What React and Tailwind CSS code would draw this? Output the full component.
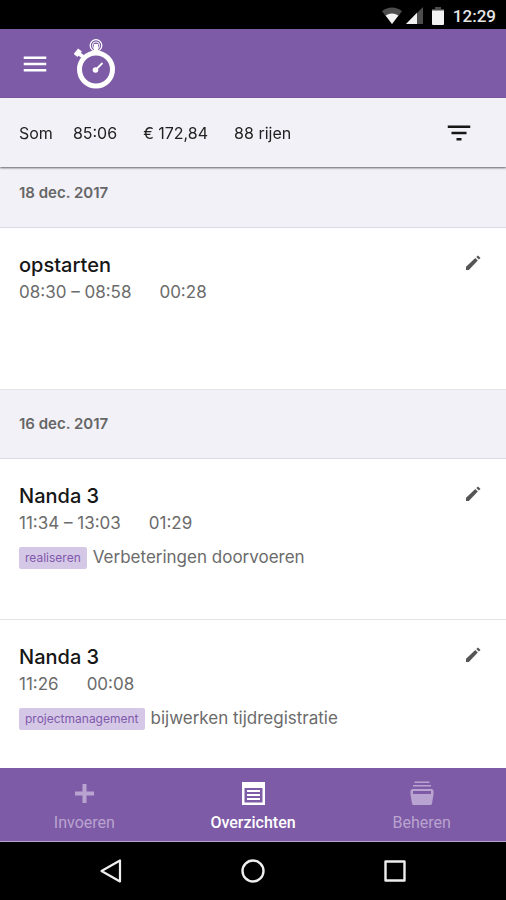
import React from 'react';
import { MdFilterList, MdMenu } from 'react-icons/md';

const days = [
  {
    date: '18 dec. 2017',
    entries: [{ id: 1, title: 'opstarten', time: '08:30 – 08:58', duration: '00:28' }],
  },
  {
    date: '16 dec. 2017',
    entries: [
      { id: 2, title: 'Nanda 3', time: '11:34 – 13:03', duration: '01:29', tag: 'realiseren', note: 'Verbeteringen doorvoeren' },
      { id: 3, title: 'Nanda 3', time: '11:26', duration: '00:08', tag: 'projectmanagement', note: 'bijwerken tijdregistratie' },
    ],
  },
];

const StatusBar = () => (
  <div className="flex h-[29px] shrink-0 items-center justify-end bg-black pr-2.5 pt-0.5 font-['Roboto',sans-serif] text-[17px] font-medium leading-6 text-[#e6e6e6]">
    <svg className="mr-0.5 h-[18px] w-[22px]" viewBox="0 0 22 18">
      <path d="M1 4.2C7 -.6 15 -.6 21 4.2L11 17z" fill="#4d4d4d" />
      <path d="M4.6 8.6c4-2.8 8.8-2.8 12.8 0L11 17z" fill="#f2f2f2" />
    </svg>
    <svg className="mr-2 h-[18px] w-[18px]" viewBox="0 0 18 18">
      <path d="M18 0v17H1z" fill="#4d4d4d" />
      <path d="M12 5.7V17H1z" fill="#f2f2f2" />
    </svg>
    <svg className="mr-2 h-[18px] w-[14px]" viewBox="0 0 14 18">
      <path d="M4 0h6v2h3v3H1V2h3z" fill="#4d4d4d" />
      <path d="M1 3.5h12V17a1 1 0 0 1-1 1H2a1 1 0 0 1-1-1z" fill="#f2f2f2" />
    </svg>
    <span>12:29</span>
  </div>
);

const StopwatchLogo = () => (
  <svg className="h-[50px] w-[42px]" viewBox="0 0 42 50" fill="none" stroke="#fff">
    <circle cx="22" cy="6.5" r="5.8" strokeWidth="1.3" />
    <circle cx="22" cy="6.5" r="3.6" strokeWidth="1" />
    <path d="M22 5v9" strokeWidth="4.4" />
    <circle cx="22" cy="30.5" r="16.5" strokeWidth="5" />
    <path d="M10 18.5L4 14" strokeWidth="3.6" />
    <path d="M1.5 16.5l4.5-5.5" strokeWidth="5" />
    <path d="M22 30.5l6.5-6.5" strokeWidth="1.8" />
    <circle cx="21.5" cy="31" r="2.8" fill="#fff" stroke="none" />
  </svg>
);

const PencilIcon = () => (
  <svg className="h-[15px] w-[15px]" viewBox="0 0 15 15" fill="#555">
    <path d="M0 11.8L9.3 3l2.5 2.5L2.8 15H0z" />
    <path d="M10.3 2.1L12 .5 14.5 3l-1.7 1.6z" />
  </svg>
);

const PlusIcon = () => (
  <svg className="h-6 w-6" viewBox="0 0 24 24" fill="currentColor">
    <path d="M10.5 3h4v7.500H22v4h-7.500V22h-4v-7.500H3v-4h7.500z" />
  </svg>
);

const ListIcon = () => (
  <svg className="h-6 w-6" viewBox="0 0 24 24" fill="currentColor">
    <path fillRule="evenodd" d="M1 1h23v23H1zM3.500 7v14.500h18V7z" />
    <path d="M6 9h13v2H6zM6 13h13v2H6zM6 17h13v2H6z" />
  </svg>
);

const FilesIcon = () => (
  <svg className="h-6 w-6" viewBox="0 0 24 24" fill="currentColor">
    <path d="M4.5 .5h15v1.600h-15zM3 4h18v1.600H3z" />
    <path fillRule="evenodd" d="M2 8h20l1.500 1.500v4L22 22.500q-.4 1.500-1.500 1.500h-17Q2.400 24 2 22.500L.5 13.500v-4zM3 10v3h18v-3z" />
  </svg>
);

const tabs = [
  { label: 'Invoeren', icon: PlusIcon },
  { label: 'Overzichten', icon: ListIcon, active: true },
  { label: 'Beheren', icon: FilesIcon },
];

const Entry = ({ title, time, duration, tag, note }) => (
  <li className="flex h-[161px] items-start justify-between border-b border-[#e4e4e8] bg-white pl-[19px] pr-[25px] pt-6 last:border-b-0">
    <div>
      <h3 className="text-xl font-medium leading-[26px] text-[#161616]">{title}</h3>
      <p className="flex gap-7 text-[17px] leading-7 text-[#6b6b6b]">
        <span>{time}</span>
        <span>{duration}</span>
      </p>
      {tag && (
        <p className="mt-2 flex items-center gap-1.5 text-[17px] leading-6 text-[#6b6b6b]">
          <span className="mt-0.5 rounded-xs bg-[#d5c8e6] px-1.5 text-xs leading-[22px] text-[#8059ac]">{tag}</span>
          <span>{note}</span>
        </p>
      )}
    </div>
    <button type="button" aria-label="Bewerken" className="mt-[3px]">
      <PencilIcon />
    </button>
  </li>
);

export default function App() {
  return (
    <div className="flex h-screen flex-col bg-white font-['Inter',sans-serif]">
      <StatusBar />

      <header className="flex h-[69px] shrink-0 items-center bg-[#7e5ba6] pl-5">
        <button type="button" aria-label="Menu" className="mr-6 text-white">
          <MdMenu size={30} />
        </button>
        <StopwatchLogo />
      </header>

      <div className="z-10 flex h-[69px] shrink-0 items-center gap-5 bg-[#f1f1f7] pl-[19px] pr-8 text-base text-[#222] shadow-[0_1px_2px_rgba(0,0,0,0.6)]">
        <span>Som</span>
        <div className="flex gap-[26px]">
          <span>85:06</span>
          <span>€ 172,84</span>
          <span>88 rijen</span>
        </div>
        <button type="button" aria-label="Filteren" className="ml-auto text-[#161616]">
          <MdFilterList size={30} />
        </button>
      </div>

      <main className="-mt-[9px] min-h-0 flex-1 overflow-y-auto [scrollbar-width:none]">
        {days.map((day) => (
          <section key={day.date}>
            <h2 className="flex h-[70px] items-center border-b border-t border-b-[#dcdce8] border-t-[#e4e4e8] bg-[#f1f1f7] pl-[19px] text-[15px] font-semibold leading-6 text-[#666]">
              {day.date}
            </h2>
            <ul>
              {day.entries.map((entry) => (
                <Entry key={entry.id} {...entry} />
              ))}
            </ul>
          </section>
        ))}
      </main>

      <nav className="flex h-[74px] shrink-0 border-b border-[#b8a3cf] bg-[#7e5ba6] font-['Roboto',sans-serif] text-base leading-5">
        {tabs.map(({ label, icon: Icon, active }) => (
          <button
            key={label}
            type="button"
            className={`flex flex-1 flex-col items-center gap-2 pt-[13px] ${active ? 'font-medium text-white' : 'text-[#b9a3d0]'}`}
          >
            <Icon />
            <span>{label}</span>
          </button>
        ))}
      </nav>

      <div className="flex h-[58px] shrink-0 items-center justify-center gap-[118px] bg-black">
        <button type="button" aria-label="Terug">
          <svg className="h-6 w-6" viewBox="0 0 24 24" fill="none" stroke="#eee" strokeWidth="2.2" strokeLinejoin="round">
            <path d="M21 1.5v21L2.5 12z" />
          </svg>
        </button>
        <button type="button" aria-label="Startscherm">
          <svg className="h-6 w-6" viewBox="0 0 24 24" fill="none" stroke="#eee" strokeWidth="2.4">
            <circle cx="12" cy="12" r="10.5" />
          </svg>
        </button>
        <button type="button" aria-label="Recente apps">
          <svg className="h-6 w-6" viewBox="0 0 24 24" fill="none" stroke="#eee" strokeWidth="2.4" strokeLinejoin="round">
            <path d="M2.5 2.5h19v19h-19z" />
          </svg>
        </button>
      </div>
    </div>
  );
}
